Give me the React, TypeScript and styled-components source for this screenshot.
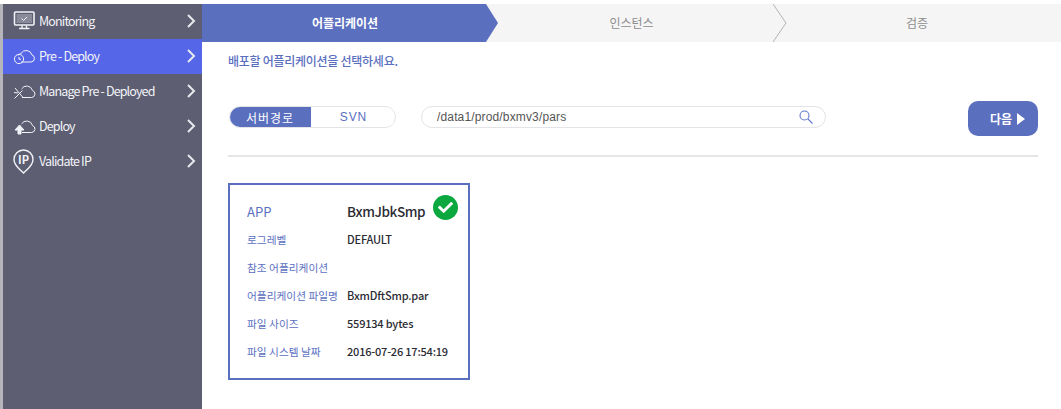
import React from 'react'
import styled, { createGlobalStyle } from 'styled-components'
import { FaCheck } from 'react-icons/fa'

const GlobalStyle = createGlobalStyle`
    html, body {
        margin: 0;
        padding: 0;
        background: #fff;
        font-family: "Noto Sans CJK KR", "Noto Sans", sans-serif;
    }
    * {
        box-sizing: border-box;
    }
`

const SPage = styled.div`
    display: flex;
    width: 1061px;
    height: 409px;
    padding-top: 4px;
    overflow: hidden;
`
const SSidebar = styled.nav`
    width: 202px;
    flex-shrink: 0;
    background: #5d5e71;
    border-left: 3px solid #b5b5bb;
`
const SMenuItem = styled.div<{ $active?: boolean }>`
    display: flex;
    align-items: center;
    height: 35px;
    padding: 0 6px 2px 10px;
    background: ${(props) => (props.$active ? '#5566e8' : 'transparent')};
    color: #f2f3f8;
    font-size: 12.5px;
    letter-spacing: -0.85px;
`
const SMenuIcon = styled.svg`
    width: 22px;
    height: 22px;
    margin-right: 4px;
    flex-shrink: 0;
    overflow: visible;
    fill: none;
    stroke: #f2f3f8;
    stroke-width: 1;
`
const SMenuLabel = styled.span`
    flex: 1;
`
const SChevron = styled.svg`
    width: 10px;
    height: 14px;
    fill: none;
    stroke: #e8e9ef;
    stroke-width: 2;
`
const SMain = styled.main`
    flex: 1;
    min-width: 0;
`
const SStepper = styled.div`
    display: grid;
    grid-template-columns: 284px 287px 1fr;
    height: 38px;
    background: #f5f5f5;
`
const SStep = styled.div<{ $active?: boolean }>`
    position: relative;
    display: flex;
    align-items: center;
    justify-content: center;
    padding: 0 0 2px ${(props) => (props.$active ? '2px' : '4px')};
    font-size: 12px;
    font-weight: ${(props) => (props.$active ? 700 : 400)};
    color: ${(props) => (props.$active ? '#fff' : '#8d8d8d')};
    background: ${(props) => (props.$active ? '#5b6fbf' : 'transparent')};
    &::after {
        content: '';
        display: ${(props) => (props.$active ? 'block' : 'none')};
        position: absolute;
        top: 0;
        left: 100%;
        width: 12px;
        height: 38px;
        background: #5b6fbf;
        clip-path: polygon(0 0, 100% 50%, 0 100%);
    }
`
const SLastStep = styled(SStep)`
    padding-left: 0;
`
const SStepDivider = styled.svg`
    position: absolute;
    top: 0;
    left: 100%;
    width: 14px;
    height: 38px;
    fill: none;
    stroke: #b4b4b4;
`
const SContent = styled.div`
    padding: 0 23px 0 26px;
`
const SGuide = styled.div`
    margin-top: 10px;
    height: 18px;
    line-height: 18px;
    font-size: 12px;
    font-weight: 500;
    letter-spacing: -0.27px;
    color: #5b6fbf;
`
const SToolbar = styled.div`
    display: flex;
    align-items: flex-start;
    height: 35px;
    margin-top: 31px;
`
const SSwitch = styled.div`
    display: flex;
    width: 167px;
    height: 22px;
    margin: 5px 0 0 1px;
    border: 1px solid #e4e4e8;
    border-radius: 11px;
    overflow: hidden;
`
const SSwitchItem = styled.div<{ $on?: boolean }>`
    display: flex;
    align-items: center;
    justify-content: center;
    width: ${(props) => (props.$on ? '82px' : '83px')};
    margin: ${(props) => (props.$on ? '-1px 0 -1px -1px' : '0')};
    padding-left: ${(props) => (props.$on ? '0' : '2px')};
    font-size: 12px;
    letter-spacing: 0.9px;
    color: ${(props) => (props.$on ? '#fff' : '#5b6fbf')};
    background: ${(props) => (props.$on ? '#5b6fbf' : '#fff')};
    font-family: ${(props) => (props.$on ? 'inherit' : '"Liberation Sans", sans-serif')};
`
const SSearch = styled.div`
    display: flex;
    align-items: center;
    justify-content: space-between;
    width: 405px;
    height: 22px;
    margin: 5px 0 0 25px;
    padding: 0 12px 0 15px;
    border: 1px solid #e4e4e8;
    border-radius: 11px;
    font-family: "Liberation Sans", sans-serif;
    font-size: 12px;
    letter-spacing: 0.15px;
    color: #555;
`
const SSearchIcon = styled.svg`
    width: 14px;
    height: 14px;
    fill: none;
    stroke: #5f78cc;
    stroke-width: 1.1;
`
const SNextButton = styled.button`
    display: flex;
    align-items: center;
    justify-content: flex-end;
    gap: 5px;
    width: 70px;
    height: 35px;
    margin-left: auto;
    padding: 0 13px 0 0;
    border: none;
    border-radius: 10px;
    background: #5b6fbf;
    color: #fff;
    font-family: inherit;
    font-size: 12px;
    font-weight: 700;
`
const SPlay = styled.span`
    width: 0;
    height: 0;
    border-top: 6px solid transparent;
    border-bottom: 6px solid transparent;
    border-left: 8px solid #fff;
`
const SDivider = styled.hr`
    height: 2px;
    margin: 19px 0 26px;
    border: none;
    background: #e5e5e5;
`
const SCard = styled.section`
    position: relative;
    width: 242px;
    height: 197px;
    padding: 12px 17px 0;
    border: 2px solid #5b6fbf;
`
const SCardRow = styled.div`
    display: flex;
    align-items: center;
    height: 28px;
`
const SCardLabel = styled.span<{ $head?: boolean }>`
    width: 100px;
    flex-shrink: 0;
    font-size: ${(props) => (props.$head ? '13px' : '10.7px')};
    color: #5b6fbf;
`
const SCardValue = styled.span<{ $head?: boolean }>`
    font-size: ${(props) => (props.$head ? '13.5px' : '11px')};
    font-weight: 500;
    letter-spacing: ${(props) => (props.$head ? '-0.4px' : '-0.2px')};
    color: #2b2b33;
`
const SCheckBadge = styled.div`
    position: absolute;
    top: 10px;
    right: 10px;
    display: flex;
    align-items: center;
    justify-content: center;
    width: 25px;
    height: 25px;
    border-radius: 50%;
    background: #0ba73f;
    color: #fff;
    font-size: 15px;
`

const MenuGlyph: React.FC<{ kind: string }> = ({ kind }) => {
    return (
        <SMenuIcon viewBox="0 0 22 22">
            {kind === 'monitor' && (
                <>
                    <rect x="1.500" y="2" width="19.500" height="13" rx="1" strokeWidth="1.6" />
                    <rect x="3.500" y="4" width="15.500" height="9" fill="#8a8b9a" stroke="none" />
                    <path d="M8.500 8.500l2 2 3.500-3.500" />
                    <path d="M9 15.500v2.500M13.500 15.500v2.500M6 18.500h10.500" strokeWidth="1.400" />
                </>
            )}
            {kind === 'clock' && (
                <>
                    <path d="M8 17h10a3.600 3.600 0 0 0 1-7A6 6 0 0 0 8 8.500a4.500 4.500 0 0 0-3 2" />
                    <circle cx="6" cy="14" r="4.600" />
                    <path d="M6 12v2.300h2" />
                </>
            )}
            {kind === 'cross' && (
                <>
                    <path d="M9 17.500h9.500a3.600 3.600 0 0 0 1-7A6 6 0 0 0 8.500 9" />
                    <path d="M2 8l8 9.500M1.500 18.500l8-8M1 12.500l4 .5" />
                </>
            )}
            {kind === 'upload' && (
                <>
                    <path d="M9 17.500h9.500a3.600 3.600 0 0 0 1-7A6 6 0 0 0 8.500 9" />
                    <path d="M6.500 10l-4.500 5h3v4h3v-4h3z" fill="#f2f3f8" />
                </>
            )}
            {kind === 'pin' && (
                <>
                    <path
                        d="M10.500 23C7 19 1 16 1 9.500a9.500 9.500 0 0 1 19 0C20 16 14 19 10.500 23z"
                        strokeWidth="1.400"
                    />
                    <text x="10.500" y="13.500" textAnchor="middle" fontSize="11" fontWeight="700" letterSpacing="0" fill="#f2f3f8" stroke="none">
                        IP
                    </text>
                </>
            )}
        </SMenuIcon>
    )
}

const menuItems = [
    { label: 'Monitoring', icon: 'monitor' },
    { label: 'Pre - Deploy', icon: 'clock', active: true },
    { label: 'Manage Pre - Deployed', icon: 'cross' },
    { label: 'Deploy', icon: 'upload' },
    { label: 'Validate IP', icon: 'pin' },
]

const cardRows = [
    { label: '로그레벨', value: 'DEFAULT' },
    { label: '참조 어플리케이션', value: '' },
    { label: '어플리케이션 파일명', value: 'BxmDftSmp.par' },
    { label: '파일 사이즈', value: '559134 bytes' },
    { label: '파일 시스템 날짜', value: '2016-07-26 17:54:19' },
]

const App: React.FC = () => {
    return (
        <SPage>
            <GlobalStyle />
            <SSidebar>
                {menuItems.map((item) => (
                    <SMenuItem key={item.label} $active={item.active}>
                        <MenuGlyph kind={item.icon} />
                        <SMenuLabel>{item.label}</SMenuLabel>
                        <SChevron viewBox="0 0 10 14">
                            <path d="M2 1l6 6-6 6" />
                        </SChevron>
                    </SMenuItem>
                ))}
            </SSidebar>
            <SMain>
                <SStepper>
                    <SStep $active>어플리케이션</SStep>
                    <SStep>
                        인스턴스
                        <SStepDivider viewBox="0 0 14 38">
                            <path d="M0 0l13 19L0 38" />
                        </SStepDivider>
                    </SStep>
                    <SLastStep>검증</SLastStep>
                </SStepper>
                <SContent>
                    <SGuide>배포할 어플리케이션을 선택하세요.</SGuide>
                    <SToolbar>
                        <SSwitch>
                            <SSwitchItem $on>서버경로</SSwitchItem>
                            <SSwitchItem>SVN</SSwitchItem>
                        </SSwitch>
                        <SSearch>
                            /data1/prod/bxmv3/pars
                            <SSearchIcon viewBox="0 0 14 14">
                                <circle cx="5.500" cy="5.500" r="4.500" />
                                <path d="M9 9l4.500 4.500" />
                            </SSearchIcon>
                        </SSearch>
                        <SNextButton>
                            다음
                            <SPlay />
                        </SNextButton>
                    </SToolbar>
                    <SDivider />
                    <SCard>
                        <SCheckBadge>
                            <FaCheck />
                        </SCheckBadge>
                        <SCardRow>
                            <SCardLabel $head>APP</SCardLabel>
                            <SCardValue $head>BxmJbkSmp</SCardValue>
                        </SCardRow>
                        {cardRows.map((row) => (
                            <SCardRow key={row.label}>
                                <SCardLabel>{row.label}</SCardLabel>
                                <SCardValue>{row.value}</SCardValue>
                            </SCardRow>
                        ))}
                    </SCard>
                </SContent>
            </SMain>
        </SPage>
    )
}

export default App
